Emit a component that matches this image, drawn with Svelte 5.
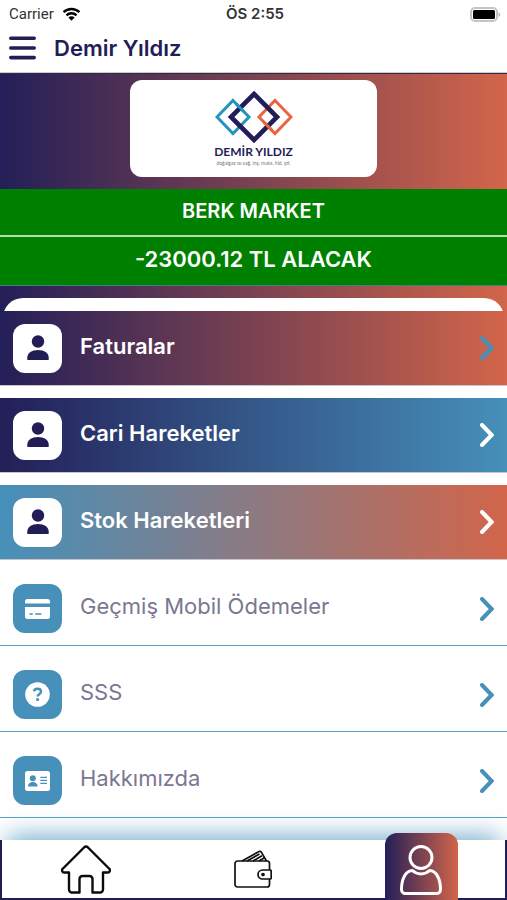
<script>
  const items = [
    { label: 'Faturalar', icon: 'user', tone: 'sunset' },
    { label: 'Cari Hareketler', icon: 'user', tone: 'ocean' },
    { label: 'Stok Hareketleri', icon: 'user', tone: 'dawn' },
    { label: 'Geçmiş Mobil Ödemeler', icon: 'card', tone: 'plain' },
    { label: 'SSS', icon: 'help', tone: 'plain' },
    { label: 'Hakkımızda', icon: 'id', tone: 'plain' }
  ];
</script>

<div class="app">
  <div class="status">
    <span class="carrier">
      Carrier
      <svg width="19" height="14" viewBox="0 0 20 15" aria-hidden="true">
        <g fill="none" stroke="#000" stroke-width="2.6">
          <path d="M1.5 5.6a12 12 0 0 1 17 0" />
          <path d="M4.6 9a7.6 7.6 0 0 1 10.8 0" />
        </g>
        <path d="M10 14.6 6.7 11.2a4.7 4.7 0 0 1 6.6 0z" />
      </svg>
    </span>
    <span class="time">ÖS 2:55</span>
    <span class="battery">
      <svg width="31" height="15" viewBox="0 0 31 15" aria-hidden="true">
        <rect x="1" y="1" width="26" height="13" rx="4" fill="#fff" stroke="#c4c4c4" stroke-width="2" />
        <rect x="3" y="3" width="22" height="9" rx="1.5" />
        <path d="M28.5 5.2c2.4.8 2.4 3.8 0 4.6z" fill="#bdbdbd" />
      </svg>
    </span>
  </div>

  <header>
    <button class="menu" aria-label="Menü">
      <svg width="27" height="24" viewBox="0 0 27 24" aria-hidden="true">
        <path d="M1.8 2.2h23.4M1.8 12h23.4M1.8 21.6h23.4" stroke="#231d57" stroke-width="3.6" stroke-linecap="round" />
      </svg>
    </button>
    <h1>Demir Yıldız</h1>
  </header>

  <section class="banner">
    <div class="logo">
      <svg width="78" height="52" viewBox="0 0 78 52" fill="none" aria-hidden="true">
        <path d="M18 9.5 34 26 18 42.5 2 26z" stroke="#2493bd" stroke-width="3" />
        <path d="M60 9.5 76 26 60 42.5 44 26z" stroke="#ea6440" stroke-width="3" />
        <path d="M39 3 62 26 39 49 16 26z" stroke="#231d57" stroke-width="4.6" />
        <path d="m21 12.600 8 8.200" stroke="#2493bd" stroke-width="3" />
        <path d="m49 31.200 8 8.200" stroke="#ea6440" stroke-width="3" />
      </svg>
      <strong>DEMİR YILDIZ</strong>
      <small>doğalgaz ısı sağ. inş. maks. hid. şti.</small>
    </div>
  </section>

  <section class="account">
    <p class="name">BERK MARKET</p>
    <p class="balance">-23000.12 TL ALACAK</p>
  </section>

  <div class="lip"><div class="sheet"></div></div>

  <nav class="list" aria-label="Hesap">
    {#each items as item}
      <a href="#{item.label}" class="row {item.tone}">
        <span class="tile">
          {#if item.icon === 'user'}
            <svg width="22" height="26" viewBox="0 0 22 26" fill="#231d57" aria-hidden="true">
              <circle cx="11" cy="6.5" r="6.2" />
              <path d="M.3 25v-2.500C.3 18 4.800 15 11 15s10.700 3 10.700 7.500V25z" />
            </svg>
          {:else if item.icon === 'card'}
            <svg width="25" height="20" viewBox="0 0 25 20" aria-hidden="true">
              <path d="M0 4.500V2.500A2.500 2.500 0 0 1 2.500 0h20A2.500 2.500 0 0 1 25 2.500v2zM0 8h25v9.500a2.500 2.500 0 0 1-2.500 2.500h-20A2.500 2.500 0 0 1 0 17.500z" fill="#fff" />
              <path d="M4.500 15h3.300M10.200 15h6.200" stroke="#4690ba" stroke-width="1.6" />
            </svg>
          {:else if item.icon === 'help'}
            <svg width="25" height="25" viewBox="0 0 25 25" aria-hidden="true">
              <circle cx="12.5" cy="12.5" r="12.3" fill="#fff" />
              <path d="M9 9.400c.5-3.700 7-3.500 7 .2 0 2.700-3.400 2.400-3.400 4.900" fill="none" stroke="#4690ba" stroke-width="2.4" />
              <circle cx="12.6" cy="17.5" r="1.6" fill="#4690ba" />
            </svg>
          {:else}
            <svg width="25" height="20" viewBox="0 0 25 20" aria-hidden="true">
              <rect width="25" height="20" rx="2.5" fill="#fff" />
              <g fill="#4690ba">
                <circle cx="7.8" cy="7.2" r="3" />
                <path d="M3 15.500c0-6 9.600-6 9.600 0z" />
              </g>
              <path d="M15.300 6.300H22M15.300 9.300H22M15.300 12.300H22" stroke="#4690ba" stroke-width="1.3" />
            </svg>
          {/if}
        </span>
        <span class="label">{item.label}</span>
        <svg class="chevron" width="14" height="24" viewBox="0 0 14 24" aria-hidden="true">
          <path d="m2 2 9.600 10L2 22" fill="none" stroke="currentColor" stroke-width="4" stroke-linecap="round" />
        </svg>
      </a>
    {/each}
  </nav>

  <nav class="tabs" aria-label="Sekmeler">
    <a href="#home" aria-label="Ana sayfa">
      <svg width="50" height="50" viewBox="0 0 50 50" fill="none" stroke="#0b0b0b" stroke-width="2.4" stroke-linejoin="round" aria-hidden="true">
        <path d="M8 28.500v17A3 3 0 0 0 11 48.500h7.500V35a3 3 0 0 1 3-3h7a3 3 0 0 1 3 3v13.500H39a3 3 0 0 0 3-3v-17h4.500a2.200 2.200 0 0 0 1.500-4L27 3.500a3 3 0 0 0-4 0L2 24.500a2.200 2.200 0 0 0 1.500 4z" />
      </svg>
    </a>
    <a href="#wallet" aria-label="Cüzdan">
      <svg width="38" height="38" viewBox="0 0 38 38" fill="none" stroke="#111" stroke-width="1.7" stroke-linejoin="round" aria-hidden="true">
        <path d="M35.500 20v-6.500a2.500 2.500 0 0 0-2.500-2.500H3.500A2.500 2.500 0 0 0 1 13.500v21A2.500 2.500 0 0 0 3.500 37H33a2.500 2.500 0 0 0 2.500-2.500V29" />
        <path d="M28.500 20H36q1.200 0 1.200 1.200v6.600Q37.200 29 36 29h-7.500a4.500 4.500 0 0 1 0-9z" />
        <path d="M8 11 25 1.500q1.500-.7 2.300.7L32.500 11M13 11l12.500-7M19 11l9-5.200M25 11l5-3" />
        <circle cx="29" cy="24.5" r="1" fill="#111" />
      </svg>
    </a>
    <a href="#profile" class="active" aria-label="Profil" aria-current="page">
      <svg width="42" height="50" viewBox="0 0 42 50" fill="none" stroke="#fff" stroke-width="3" aria-hidden="true">
        <circle cx="21" cy="12.5" r="11" />
        <path d="M12.500 25.500c4.500 4.500 12.500 4.500 17 0 7 0 11 9 11 19a4 4 0 0 1-4 4h-31a4 4 0 0 1-4-4c0-10 4-19 11-19z" stroke-linejoin="round" />
      </svg>
    </a>
  </nav>
</div>

<style>
  :global(body) {
    margin: 0;
    background: #fff;
  }
  .app {
    display: flex;
    flex-direction: column;
    min-height: 100vh;
    overflow: hidden;
    font-family: Inter, "Open Sans", sans-serif;
    color: #231d57;
  }
  .status {
    display: grid;
    grid-template-columns: 1fr auto 1fr;
    align-items: center;
    height: 28px;
    padding: 0 6px 0 9px;
    font: 15px/28px Roboto, Inter, sans-serif;
    color: #333;
  }
  .carrier {
    display: flex;
    align-items: center;
    gap: 8px;
  }
  .time {
    font-family: Inter, sans-serif;
    font-weight: 600;
  }
  .battery {
    display: flex;
    justify-content: flex-end;
  }
  header {
    display: flex;
    align-items: center;
    gap: 18px;
    height: 45px;
    padding: 0 9px 5px;
    box-sizing: border-box;
    border-bottom: 1px solid #ccc;
  }
  .menu {
    display: flex;
    padding: 0;
    border: 0;
    background: none;
  }
  h1 {
    margin: 0;
    font-size: 22px;
    line-height: 28px;
    font-weight: 600;
  }
  .banner {
    display: flex;
    justify-content: center;
    padding: 6px 12px 12px;
    border-top: 1px solid #33284a;
    background: linear-gradient(90deg, #231f58, #d2654a);
  }
  .logo {
    display: flex;
    flex-direction: column;
    align-items: center;
    box-sizing: border-box;
    width: 247px;
    height: 97px;
    padding-top: 11px;
    border-radius: 12px;
    background: #fff;
  }
  .logo strong {
    margin-top: 2px;
    font: bold 12px/14px Lato, "Noto Sans", sans-serif;
  }
  .logo small {
    font: 5px/8px Lato, "Noto Sans", sans-serif;
    color: #777;
  }
  .account {
    border-bottom: 1px solid #388383;
    background: #008000;
    color: #fff;
    text-align: center;
    font-weight: 600;
  }
  .account p {
    margin: 0;
  }
  .name {
    padding-bottom: 2px;
    border-bottom: 2px solid #b5dcb5;
    font-size: 20px;
    line-height: 44px;
  }
  .balance {
    padding-bottom: 4px;
    font-size: 22px;
    line-height: 44px;
  }
  .lip {
    height: 25px;
    box-sizing: border-box;
    padding: 12px 3px 0;
    overflow: hidden;
    background: linear-gradient(90deg, #231f58, #d2654a);
  }
  .sheet {
    height: 50px;
    border-radius: 20px;
    background: #fff;
  }
  .list {
    display: flex;
    flex-direction: column;
    gap: 12px;
  }
  .row {
    display: flex;
    align-items: center;
    box-sizing: border-box;
    height: 75px;
    padding: 0 13px;
    border-bottom: 1px solid #c9c4cb;
    color: #fff;
    text-decoration: none;
    font-size: 22px;
    line-height: 30px;
    font-weight: 600;
  }
  .sunset {
    background: linear-gradient(90deg, #231f58, #d2654a);
  }
  .ocean {
    background: linear-gradient(90deg, #231f58, #4690ba);
  }
  .dawn {
    background: linear-gradient(90deg, #4690ba, #d2654a);
  }
  .plain {
    height: 74px;
    border-color: #5d9fc4;
    color: #7b7792;
    font-weight: 400;
  }
  .tile {
    display: grid;
    place-items: center;
    width: 49px;
    height: 49px;
    border-radius: 12px;
    background: #fff;
  }
  .plain .tile {
    background: #4690ba;
  }
  .label {
    flex: 1;
    padding: 0 0 5px 18px;
  }
  .sunset .chevron,
  .plain .chevron {
    color: #4690ba;
  }
  .tabs {
    display: grid;
    grid-template: 100% / repeat(3, 1fr);
    justify-items: center;
    align-items: center;
    box-sizing: border-box;
    height: 60px;
    margin-top: auto;
    border: solid #231d57;
    border-width: 0 2px 2px;
    background: #fff;
    box-shadow: 0 -12px 24px -8px #4690bac0;
  }
  .tabs a {
    display: flex;
    align-items: center;
    justify-content: center;
  }
  .tabs .active {
    align-self: end;
    box-sizing: border-box;
    width: 73px;
    height: 67px;
    margin-bottom: -2px;
    padding-top: 6px;
    border-radius: 12px 12px 0 0;
    background: linear-gradient(90deg, #231f58, #d2654a);
  }
</style>
